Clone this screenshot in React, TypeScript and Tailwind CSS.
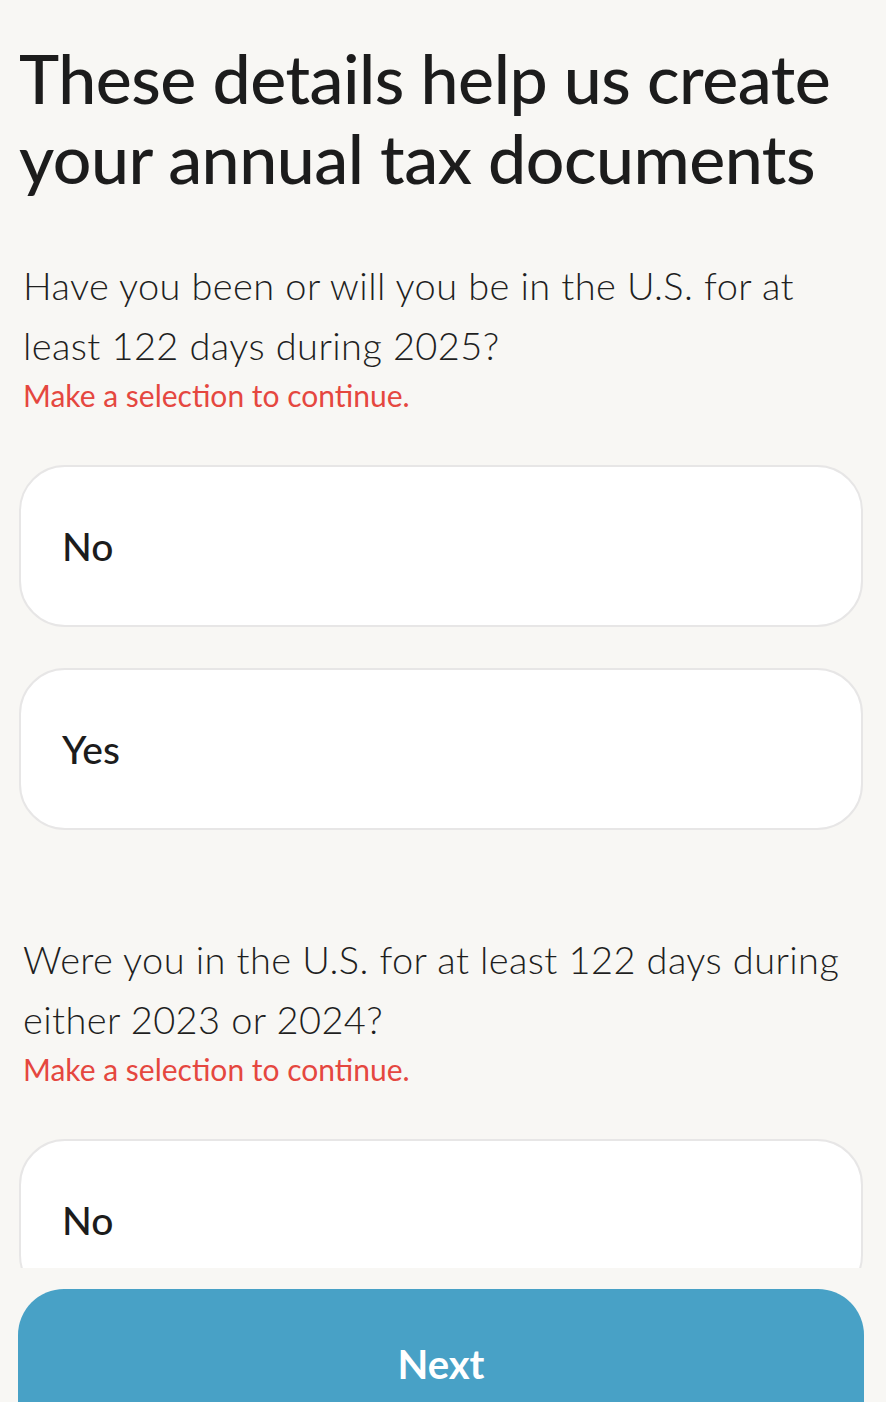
import React from "react";

const font = { fontFamily: "Lato, 'Noto Sans', sans-serif" };

function Option({ label }: { label: string }) {
  return (
    <button className="w-full h-[162px] rounded-[46px] border-2 border-[#e7e6e6] bg-white flex items-center pl-[41px] text-left">
      <span className="text-[39px] font-medium text-[#1c1c1c]">{label}</span>
    </button>
  );
}

function Question({ lines }: { lines: string }) {
  return (
    <div className="pl-[4px] pr-4">
      <p className="text-[38px] leading-[60px] font-light tracking-[0.4px] text-[#1f1f1f]">{lines}</p>
      <p className="text-[30px] leading-[36px] text-[#e5473f] mt-[2px]">
        Make a selection to continue.
      </p>
    </div>
  );
}

export default function App() {
  return (
    <div className="w-[886px] h-[1402px] bg-[#f8f7f4] overflow-hidden flex flex-col" style={font}>
      <div className="h-[1268px] shrink-0 overflow-hidden pl-[19px] pr-[23px]">
        <h1 className="pt-[38px] text-[68px] leading-[80px] font-medium text-[#1c1c1c] tracking-[-0.5px]">
          These details help us create your annual tax documents
        </h1>

        <div className="mt-[57px]">
          <Question lines="Have you been or will you be in the U.S. for at least 122 days during 2025?" />
        </div>

        <div className="mt-[52px] flex flex-col gap-[41px]">
          <Option label="No" />
          <Option label="Yes" />
        </div>

        <div className="mt-[99px]">
          <Question lines="Were you in the U.S. for at least 122 days during either 2023 or 2024?" />
        </div>

        <div className="mt-[52px] flex flex-col gap-[41px]">
          <Option label="No" />
          <Option label="Yes" />
        </div>
      </div>

      <div className="pt-[21px] pl-[18px] pr-[22px]">
        <button className="w-full h-[160px] rounded-[46px] bg-[#48a1c6] flex justify-center pt-[45px]">
          <span className="text-[40px] font-bold text-white">Next</span>
        </button>
      </div>
    </div>
  );
}
